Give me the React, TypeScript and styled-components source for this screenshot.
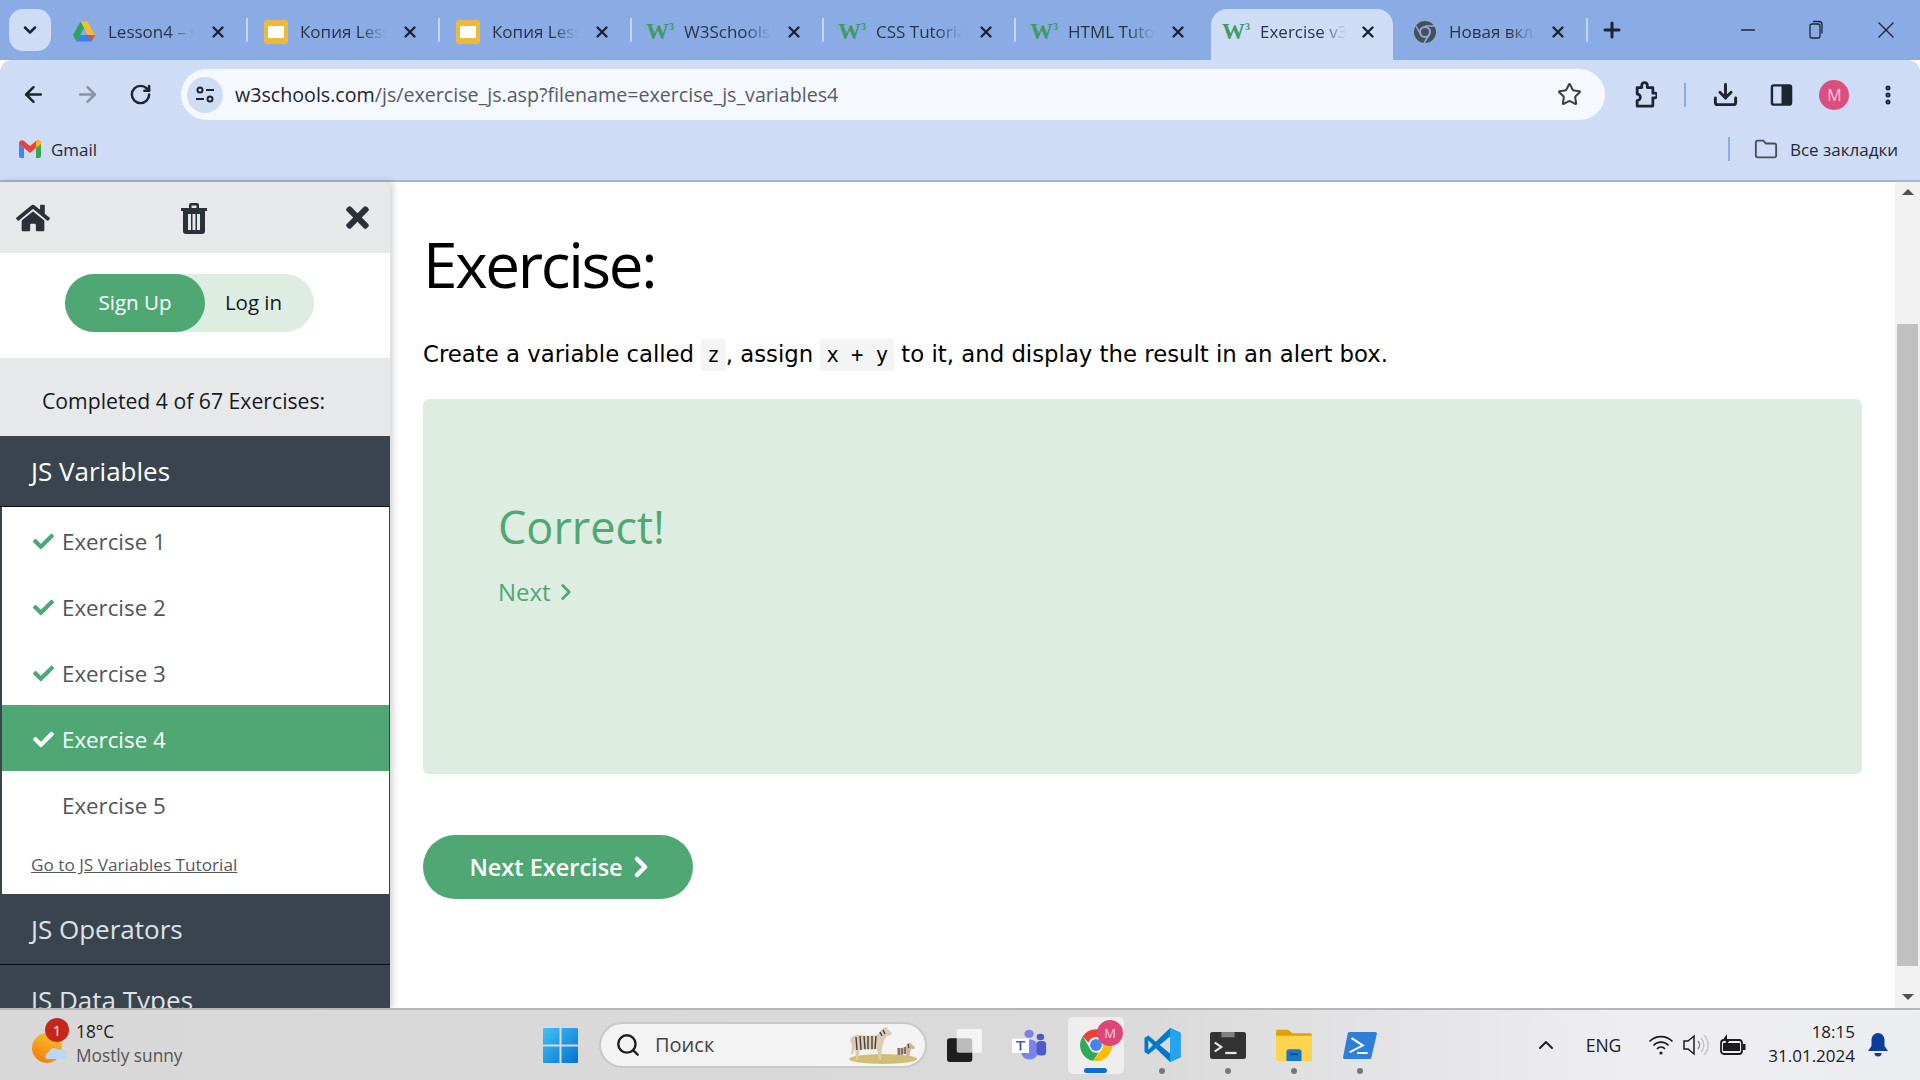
import React from "react"
import styled, { createGlobalStyle } from "styled-components"
import { ArrowLeft, ArrowRight, ChevronDown, ChevronRight, ChevronUp, Download, Minus, MoreVertical, Plus, RotateCw, Search, Star, X } from "lucide-react"
import { FaCheck, FaHome, FaTimes } from "react-icons/fa"

const uiFont = `"Open Sans", "Noto Sans", "Liberation Sans", sans-serif`

const GlobalStyle = createGlobalStyle`
    html, body {
        margin: 0;
        padding: 0;
        width: 1920px;
        height: 1080px;
        overflow: hidden;
        background: #ffffff;
        font-family: ${uiFont};
    }

    * {
        box-sizing: border-box;
    }
`

interface ITab {
    title: string
    icon: "drive" | "slides" | "w3" | "chrome"
    active?: boolean
}

const tabs: ITab[] = [
    { title: "Lesson4 – Google", icon: "drive" },
    { title: "Копия Lesson4", icon: "slides" },
    { title: "Копия Lesson4", icon: "slides" },
    { title: "W3Schools Online", icon: "w3" },
    { title: "CSS Tutorial", icon: "w3" },
    { title: "HTML Tutorial", icon: "w3" },
    { title: "Exercise v3.0", icon: "w3", active: true },
    { title: "Новая вкладка", icon: "chrome" },
]

const exercises = [
    { name: "Exercise 1", done: true },
    { name: "Exercise 2", done: true },
    { name: "Exercise 3", done: true },
    { name: "Exercise 4", done: true, current: true },
    { name: "Exercise 5", done: false },
]

function TabIcon({ icon }: { icon: ITab["icon"] }) {
    if (icon === "drive") {
        return (
            <svg width="24" height="24" viewBox="0 0 24 24">
                <path d="M8.500 1.500h7L23 15h-7z" fill="#f4bd2f" />
                <path d="M8.500 1.500 1 15l3.500 6.500L12 8z" fill="#2ea15a" />
                <path d="M4.500 21.500h15L23 15H8z" fill="#3d7fe6" />
                <path d="M16 15h7l-3.500 6.500z" fill="#e2503c" />
            </svg>
        )
    }
    if (icon === "slides") {
        return (
            <svg width="24" height="24" viewBox="0 0 24 24">
                <rect x="0" y="0" width="24" height="24" rx="3" fill="#ecb93b" />
                <rect x="4" y="6" width="16" height="12" fill="#ffffff" />
            </svg>
        )
    }
    if (icon === "chrome") {
        return (
            <svg width="24" height="24" viewBox="0 0 24 24">
                <circle cx="12" cy="12" r="11" fill="#4b4f55" />
                <circle cx="12" cy="12" r="6" fill="#8aabe4" />
                <circle cx="12" cy="12" r="4" fill="#4b4f55" />
                <path d="M12 6h10M8 15 3 6M16 15l-5 8" stroke="#8aabe4" strokeWidth="1.500" />
            </svg>
        )
    }
    return <W3Mark>W<sup>3</sup></W3Mark>
}

function ChromeLogo() {
    return (
        <svg width="38" height="38" viewBox="0 0 48 48">
            <path d="M24 4a20 20 0 0 1 17.300 10H24a10 10 0 0 0-9.500 7L7.300 13A20 20 0 0 1 24 4z" fill="#ea4335" />
            <path d="M7.300 13l9 15.500a10 10 0 0 0 11 5L20.500 44A20 20 0 0 1 7.300 13z" fill="#34a853" />
            <path d="M41.300 14A20 20 0 0 1 20.500 44l9-12a10 10 0 0 0 1-13z" fill="#fbbc04" />
            <circle cx="24" cy="24" r="9" fill="#ffffff" />
            <circle cx="24" cy="24" r="7.500" fill="#4285f4" />
        </svg>
    )
}

function App(): React.JSX.Element {
    return (
        <PageSCP>
            <GlobalStyle />

            <TabStripSCP>
                <TabMenuSCP><ChevronDown size={20} strokeWidth={3} /></TabMenuSCP>
                {tabs.map((tab, index) => (
                    <TabSCP key={index} $active={tab.active} $last={index === tabs.length - 1} $hideLine={tab.active || index === 5}>
                        <TabIconBoxSCP><TabIcon icon={tab.icon} /></TabIconBoxSCP>
                        <TabTitleSCP>{tab.title}</TabTitleSCP>
                        <X size={18} strokeWidth={3.2} color="#1c2530" />
                    </TabSCP>
                ))}
                <NewTabSCP><Plus size={24} strokeWidth={3} color="#1c2530" /></NewTabSCP>
                <WindowControlsSCP>
                    <Minus size={22} strokeWidth={1.4} />
                    <svg width="18" height="20" viewBox="0 0 18 20" fill="none" stroke="#1c2530" strokeWidth="1.300">
                        <rect x="3" y="4" width="10" height="14" rx="2" />
                        <path d="M6 1.500h6a3 3 0 0 1 3 3v9" />
                    </svg>
                    <X size={28} strokeWidth={1.2} />
                </WindowControlsSCP>
            </TabStripSCP>

            <ToolbarSCP>
                <NavIconsSCP>
                    <ArrowLeft size={25} strokeWidth={2.4} color="#1c2530" />
                    <ArrowRight size={25} strokeWidth={2.4} color="#8a93a3" />
                    <RotateCw size={23} strokeWidth={2.6} color="#1c2530" />
                </NavIconsSCP>
                <OmniboxSCP>
                    <SiteInfoSCP>
                        <svg width="20" height="20" viewBox="0 0 20 20" fill="none" stroke="#1c2530" strokeWidth="2">
                            <circle cx="5" cy="5" r="2.500" />
                            <path d="M11 5h8M1 14h8" />
                            <circle cx="15" cy="14" r="2.500" />
                        </svg>
                    </SiteInfoSCP>
                    <UrlSCP><b>w3schools.com</b>/js/exercise_js.asp?filename=exercise_js_variables4</UrlSCP>
                    <Star size={25} strokeWidth={2} color="#3a3f46" />
                </OmniboxSCP>
                <ToolIconsSCP>
                    <svg width="24" height="28" viewBox="0 0 26 28" fill="none" stroke="#1c2530" strokeWidth="3" strokeLinejoin="round">
                        <path d="M4 6h5V3.500a3 3 0 0 1 6 0V6h6v6h2a2.500 2.500 0 0 1 0 5h-2v9H4v-6a3 3 0 0 0 0-7z" transform="translate(0.500 0)" />
                    </svg>
                    <ToolDividerSCP />
                    <DownloadIconSCP size={27} strokeWidth={2.6} color="#1c2530" />
                    <svg width="23" height="24" viewBox="0 0 24 24">
                        <rect x="2" y="2" width="20" height="20" rx="2" fill="none" stroke="#1c2530" strokeWidth="2.500" />
                        <rect x="12" y="2" width="10" height="20" fill="#1c2530" />
                    </svg>
                    <AvatarSCP>M</AvatarSCP>
                    <MoreVertical size={24} strokeWidth={3} color="#1c2530" />
                </ToolIconsSCP>
            </ToolbarSCP>

            <BookmarksSCP>
                <svg width="22" height="18" viewBox="0 0 22 18">
                    <path d="M0 3v13a2 2 0 0 0 2 2h3V8z" fill="#4285f4" />
                    <path d="M22 3v13a2 2 0 0 1-2 2h-3V8z" fill="#34a853" />
                    <path d="M0 3a3 3 0 0 1 5-2l6 5 6-5a3 3 0 0 1 5 2v1l-5 4-6 5-6-5-5-4z" fill="#ea4335" />
                    <path d="M17 1a3 3 0 0 1 5 2v1l-5 4z" fill="#fbbc04" />
                </svg>
                <BookmarkTextSCP>Gmail</BookmarkTextSCP>
                <AllBookmarksSCP>
                    <BookmarkDividerSCP />
                    <svg width="24" height="22" viewBox="0 0 26 22" fill="none" stroke="#4b4f55" strokeWidth="2">
                        <path d="M2 4a2 2 0 0 1 2-2h6l3 3h9a2 2 0 0 1 2 2v11a2 2 0 0 1-2 2H4a2 2 0 0 1-2-2z" />
                    </svg>
                    <BookmarkTextSCP>Все закладки</BookmarkTextSCP>
                </AllBookmarksSCP>
            </BookmarksSCP>

            <ViewportSCP>
                <SidebarSCP>
                    <SideHeaderSCP>
                        <FaHome size={34} />
                        <TrashBoxSCP>
                            <svg width="28" height="32" viewBox="0 0 28 32">
                                <path d="M1 6h26v3H1zM9 6V3a2 2 0 0 1 2-2h6a2 2 0 0 1 2 2v3h-2.500V3.500h-5V6z" fill="#2b3139" />
                                <path d="M3 9h22v20a3 3 0 0 1-3 3H6a3 3 0 0 1-3-3z" fill="#2b3139" />
                                <path d="M8 12h3v16H8zM12.500 12h3v16h-3zM17 12h3v16h-3z" fill="#e7e8ea" />
                            </svg>
                        </TrashBoxSCP>
                        <FaTimes size={33} />
                    </SideHeaderSCP>

                    <AuthAreaSCP>
                        <AuthPillSCP>
                            <SignUpSCP>Sign Up</SignUpSCP>
                            <LoginSCP>Log in</LoginSCP>
                        </AuthPillSCP>
                    </AuthAreaSCP>

                    <CompletedSCP>Completed 4 of 67 Exercises:</CompletedSCP>

                    <SectionTitleSCP $open>JS Variables</SectionTitleSCP>
                    <ExerciseListSCP>
                        {exercises.map((exercise) => (
                            <ExerciseRowSCP key={exercise.name} $current={exercise.current}>
                                <CheckBoxSCP $current={exercise.current}>{exercise.done && <FaCheck size={21} />}</CheckBoxSCP>
                                {exercise.name}
                            </ExerciseRowSCP>
                        ))}
                        <TutorialLinkSCP>Go to JS Variables Tutorial</TutorialLinkSCP>
                    </ExerciseListSCP>
                    <SectionTitleSCP>JS Operators</SectionTitleSCP>
                    <SectionTitleSCP>JS Data Types</SectionTitleSCP>
                </SidebarSCP>

                <MainSCP>
                    <TitleSCP>Exercise:</TitleSCP>
                    <QuestionSCP>
                        Create a variable called <CodeSCP>z</CodeSCP>, assign <CodeSCP>x + y</CodeSCP> to it, and display the result in an alert box.
                    </QuestionSCP>
                    <ResultBoxSCP>
                        <CorrectSCP>Correct!</CorrectSCP>
                        <NextLinkSCP>Next <ChevronRight size={26} strokeWidth={2.6} /></NextLinkSCP>
                    </ResultBoxSCP>
                    <NextButtonSCP>Next Exercise <ChevronRight size={32} strokeWidth={3.4} /></NextButtonSCP>
                </MainSCP>

                <ScrollbarSCP>
                    <ScrollArrowSCP $up />
                    <ScrollThumbSCP />
                    <ScrollArrowSCP />
                </ScrollbarSCP>
            </ViewportSCP>

            <TaskbarSCP>
                <WeatherSCP>
                    <WeatherIconSCP>
                        <svg width="34" height="32" viewBox="0 0 34 32">
                            <defs>
                                <linearGradient id="sun" x1="0.700" y1="0" x2="0.200" y2="1">
                                    <stop offset="0" stopColor="#f5c12e" />
                                    <stop offset="1" stopColor="#f57a0b" />
                                </linearGradient>
                            </defs>
                            <circle cx="15" cy="16" r="15" fill="url(#sun)" />
                            <path d="M14 27a5 5 0 0 1 3-7 6 6 0 0 1 10-2 5 5 0 0 1 5 9z" fill="#bcd6f5" />
                        </svg>
                        <WeatherBadgeSCP>1</WeatherBadgeSCP>
                    </WeatherIconSCP>
                    <WeatherTextSCP>
                        <span>18°C</span>
                        <WeatherNoteSCP>Mostly sunny</WeatherNoteSCP>
                    </WeatherTextSCP>
                </WeatherSCP>

                <TaskCenterSCP>
                    <svg width="35" height="35" viewBox="0 0 35 35">
                        <defs>
                            <linearGradient id="win" x1="0" y1="0" x2="1" y2="1">
                                <stop offset="0" stopColor="#3fc3f7" />
                                <stop offset="1" stopColor="#0472cf" />
                            </linearGradient>
                        </defs>
                        <path d="M1 0h15.500v16.500H0V1a1 1 0 0 1 1-1zM18.500 0H34a1 1 0 0 1 1 1v15.500H18.500zM0 18.500h16.500V35H1a1 1 0 0 1-1-1zM18.500 18.500H35V34a1 1 0 0 1-1 1H18.500z" fill="url(#win)" />
                    </svg>
                    <SearchBoxSCP>
                        <Search size={26} strokeWidth={2.2} color="#1f1f1f" />
                        <SearchTextSCP>Поиск</SearchTextSCP>
                        <svg width="72" height="38" viewBox="0 0 72 38">
                            <ellipse cx="36" cy="33" rx="34" ry="5" fill="#d3bd72" />
                            <path d="M3 14c1-3 4-5 8-5 7 1 14 1 19 0l6-7 3-1 6 6-1 2-4 1-3 4-2 8-1 12h-2l-2-11-11 1-6-1-2 11H9l-1-12-2 6-2 0 1-8z" fill="#d9ccb8" />
                            <path d="M9 11l1 13M13 10l1 14M17 10l1 13M21 10l0 13M25 10l0 13M29 10l-1 13M33 6l2 4M36 4l2 4" stroke="#4a3f35" strokeWidth="1.400" fill="none" />
                            <path d="M50 22c3 0 6 0 8-1l3-4 2 0 5 4-1 2-3 0-1 3-1 7h-2l-1-5h-5l-1 5h-2l-1-5z" fill="#c8b59a" />
                            <path d="M52 22v7M55 22v7M58 21v7M61 18l1 4" stroke="#4a3f35" strokeWidth="1.100" fill="none" />
                        </svg>
                    </SearchBoxSCP>
                    <TaskSlotSCP>
                        <svg width="35" height="33" viewBox="0 0 36 36" preserveAspectRatio="none">
                            <rect x="0" y="10" width="26" height="26" rx="3" fill="#1e1e1e" />
                            <rect x="10" y="0" width="26" height="26" rx="2" fill="#ffffff" opacity="0.700" />
                        </svg>
                    </TaskSlotSCP>
                    <TaskSlotSCP>
                        <svg width="36" height="32" viewBox="0 0 38 40" preserveAspectRatio="none">
                            <circle cx="18" cy="6" r="5" fill="#7b83eb" />
                            <circle cx="30" cy="10" r="4" fill="#5059c9" />
                            <rect x="10" y="13" width="17" height="25" rx="8" fill="#7b83eb" />
                            <rect x="26" y="15" width="10" height="18" rx="4" fill="#5059c9" />
                            <rect x="0" y="12" width="18" height="18" fill="#ffffff" />
                            <path d="M4 16h10M9 16v11" stroke="#4b53bc" strokeWidth="2" />
                        </svg>
                    </TaskSlotSCP>
                    <TaskSlotSCP $active>
                        <ActiveTileSCP>
                            <ChromeLogo />
                            <ChromeBadgeSCP>M</ChromeBadgeSCP>
                            <ActiveBarSCP />
                        </ActiveTileSCP>
                    </TaskSlotSCP>
                    <TaskSlotSCP $running>
                        <svg width="37" height="36" viewBox="0 0 38 38">
                            <path d="M27 1 38 6v26l-11 5-15-14.500L4 29 0 26.500V11.500L4 9l8 6.500z" fill="#0078c9" />
                            <path d="M27 1 38 6v26l-11 5z" fill="#22a4ee" />
                            <path d="M27 10v18l-11-9z" fill="#d9d9d9" />
                            <path d="M4 14v10l5-5z" fill="#d9d9d9" />
                        </svg>
                    </TaskSlotSCP>
                    <TaskSlotSCP $running>
                        <svg width="36" height="27" viewBox="0 0 38 36" preserveAspectRatio="none">
                            <rect width="38" height="36" rx="3" fill="#333333" />
                            <rect x="12" width="14" height="7" fill="#808080" />
                            <path d="M5 14l7 6-7 6" fill="none" stroke="#e5e5e5" strokeWidth="2.500" />
                            <path d="M16 28h12" stroke="#e5e5e5" strokeWidth="3" />
                        </svg>
                    </TaskSlotSCP>
                    <TaskSlotSCP $running>
                        <svg width="36" height="32" viewBox="0 0 38 38" preserveAspectRatio="none">
                            <path d="M0 3a2 2 0 0 1 2-2h11l4 4h19a2 2 0 0 1 2 2v4H0z" fill="#e0a100" />
                            <path d="M0 8h38v28a2 2 0 0 1-2 2H2a2 2 0 0 1-2-2z" fill="#fdd34f" />
                            <path d="M11 27a3 3 0 0 1 3-3h10a3 3 0 0 1 3 3v11H11z" fill="#1a76c9" />
                            <path d="M15 30h8" stroke="#0c3f78" strokeWidth="2" />
                        </svg>
                    </TaskSlotSCP>
                    <TaskSlotSCP $running>
                        <svg width="34" height="27" viewBox="0 0 36 36" preserveAspectRatio="none">
                            <path d="M7 0h27a2 2 0 0 1 2 2l-6 32a2 2 0 0 1-2 2H2a2 2 0 0 1-2-2L5 2a2 2 0 0 1 2-2z" fill="#2f7fd8" />
                            <path d="M9 8l12 10-14 9M15 28h11" fill="none" stroke="#ffffff" strokeWidth="2.500" />
                        </svg>
                    </TaskSlotSCP>
                </TaskCenterSCP>

                <TrayIconsSCP>
                    <ChevronUp size={24} strokeWidth={2} color="#222" />
                    <TrayItemSCP $gap={28}><TrayLangSCP>ENG</TrayLangSCP></TrayItemSCP>
                    <TrayItemSCP $gap={27}>
                        <svg width="26" height="22" viewBox="0 0 26 22" fill="none" stroke="#1c1c1c" strokeWidth="1.700">
                            <path d="M1.500 7.500a16 16 0 0 1 23 0M5.500 11.500a10 10 0 0 1 15 0M9 15a5 5 0 0 1 8 0" />
                            <circle cx="13" cy="19" r="1.600" fill="#1c1c1c" stroke="none" />
                        </svg>
                    </TrayItemSCP>
                    <TrayItemSCP $gap={9}>
                        <svg width="26" height="24" viewBox="0 0 26 24" fill="none" strokeWidth="1.500">
                            <path d="M1 8h4l6-5v18l-6-5H1z" stroke="#1c1c1c" />
                            <path d="M15 8a6 6 0 0 1 0 8" stroke="#8a8a8a" />
                            <path d="M18 5a10 10 0 0 1 0 14M21 2a14 14 0 0 1 0 20" stroke="#c4c4c4" />
                        </svg>
                    </TrayItemSCP>
                    <TrayItemSCP $gap={11}>
                        <svg width="26" height="22" viewBox="0 0 26 22">
                            <rect x="1" y="6" width="21" height="14" rx="3" fill="none" stroke="#1c1c1c" strokeWidth="1.800" />
                            <rect x="3" y="9" width="17" height="8" fill="#1c1c1c" />
                            <rect x="23" y="10" width="2.500" height="6" fill="#1c1c1c" />
                            <path d="M7 0 2 7h4l-1 5 6-7H7z" fill="#1c1c1c" />
                        </svg>
                    </TrayItemSCP>
                    <TrayItemSCP $gap={22}>
                        <ClockSCP>
                            <span>18:15</span>
                            <span>31.01.2024</span>
                        </ClockSCP>
                    </TrayItemSCP>
                    <TrayItemSCP $gap={13}>
                        <svg width="20" height="24" viewBox="0 0 20 24">
                            <path d="M10 0a6.500 6.500 0 0 1 6.500 6.500V13l3.500 5H0l3.500-5V6.500A6.500 6.500 0 0 1 10 0z" fill="#0a3d9c" />
                            <path d="M6.500 20h7a3.500 3.500 0 0 1-7 0z" fill="#0a3d9c" />
                        </svg>
                    </TrayItemSCP>
                </TrayIconsSCP>
            </TaskbarSCP>
        </PageSCP>
    )
}

export default App

const PageSCP = styled.div`
    width: 1920px;
    height: 1080px;
    display: flex;
    flex-direction: column;
    overflow: hidden;
`

const TabStripSCP = styled.div`
    height: 60px;
    background: #8aabe4;
    display: flex;
    padding: 9px 0 0 9px;
    color: #1c2530;
`

const TabMenuSCP = styled.div`
    width: 42px;
    height: 42px;
    margin-right: 4px;
    border-radius: 14px;
    background: #cedcf5;
    display: flex;
    align-items: center;
    justify-content: center;
`

const TabSCP = styled.div<{ $active?: boolean; $last?: boolean; $hideLine?: boolean }>`
    width: ${(props) => (props.$active ? "182px" : props.$last ? "188px" : "192px")};
    height: 51px;
    margin: ${(props) => (props.$active ? "0 6px 0 4px" : "0")};
    padding: 0 ${(props) => (props.$active ? "16px" : "20px")} 6px ${(props) => (props.$active ? "13px" : props.$last ? "14px" : "17px")};
    display: flex;
    align-items: center;
    position: relative;
    border-radius: 16px 16px 0 0;
    background: ${(props) => (props.$active ? "#cedcf5" : "transparent")};

    &::after {
        content: "";
        display: ${(props) => (props.$hideLine ? "none" : "block")};
        position: absolute;
        right: -1px;
        top: 9px;
        width: 2px;
        height: 24px;
        background: #c5d5f1;
    }
`

const TabIconBoxSCP = styled.div`
    width: 24px;
    height: 24px;
    flex: none;
    display: flex;
    align-items: center;
    justify-content: center;
`

const W3Mark = styled.span`
    font-family: "Liberation Serif", serif;
    font-weight: 700;
    font-size: 23px;
    line-height: 24px;
    color: #3f9a66;

    sup {
        font-size: 10px;
        line-height: 0;
        vertical-align: 9px;
    }
`

const TabTitleSCP = styled.div`
    width: 86px;
    margin: 0 auto 0 12px;
    overflow: hidden;
    white-space: nowrap;
    font-size: 17px;
    color: #2a3542;
    -webkit-mask-image: linear-gradient(90deg, #000 70%, transparent 100%);
    mask-image: linear-gradient(90deg, #000 70%, transparent 100%);
`

const NewTabSCP = styled.div`
    width: 48px;
    height: 42px;
    display: flex;
    align-items: center;
    justify-content: center;
    margin-left: 1px;
`

const WindowControlsSCP = styled.div`
    margin-left: auto;
    width: 183px;
    height: 42px;
    padding-right: 20px;
    display: flex;
    align-items: center;
    justify-content: space-between;
`

const ToolbarSCP = styled.div`
    height: 60px;
    background: #cedcf5;
    border-radius: 12px 12px 0 0;
    display: flex;
    align-items: flex-start;
    padding-top: 9px;
`

const NavIconsSCP = styled.div`
    width: 181px;
    height: 51px;
    padding: 0 29px 0 21px;
    display: flex;
    align-items: center;
    justify-content: space-between;
`

const OmniboxSCP = styled.div`
    width: 1424px;
    height: 51px;
    border-radius: 26px;
    background: #f5f8fd;
    padding: 0 23px 0 6px;
    display: flex;
    align-items: center;
`

const SiteInfoSCP = styled.div`
    width: 36px;
    height: 36px;
    flex: none;
    border-radius: 50%;
    background: #cedcf5;
    display: flex;
    align-items: center;
    justify-content: center;
`

const UrlSCP = styled.div`
    flex: 1;
    margin-left: 12px;
    font-size: 19.650px;
    color: #555c66;
    white-space: nowrap;

    b {
        font-weight: 400;
        color: #1c2530;
    }
`

const ToolIconsSCP = styled.div`
    flex: 1;
    height: 51px;
    padding: 0 20px 0 28px;
    display: flex;
    align-items: center;
    justify-content: space-between;
`

const DownloadIconSCP = styled(Download)`
    margin-right: 4px;
`

const ToolDividerSCP = styled.div`
    width: 2px;
    height: 24px;
    background: #8aabe4;
`

const AvatarSCP = styled.div`
    width: 30px;
    height: 30px;
    border-radius: 50%;
    background: #dd4d7d;
    color: #f7d5e1;
    font-size: 16px;
    display: flex;
    align-items: center;
    justify-content: center;
`

const BookmarksSCP = styled.div`
    height: 62px;
    background: #cedcf5;
    border-bottom: 2px solid #a9b5cf;
    display: flex;
    align-items: center;
    padding: 0 22px 2px 19px;
`

const BookmarkTextSCP = styled.span`
    font-size: 17px;
    color: #1f2a37;
    margin-left: 10px;
`

const BookmarkDividerSCP = styled(ToolDividerSCP)`
    margin-right: 12px;
`

const AllBookmarksSCP = styled.div`
    margin-left: auto;
    display: flex;
    align-items: center;
    gap: 12px;

    span {
        margin-left: 0;
    }
`

const ViewportSCP = styled.div`
    flex: 1;
    min-height: 0;
    display: flex;
    background: #ffffff;
`

const SidebarSCP = styled.aside`
    width: 390px;
    flex: none;
    overflow: hidden;
    background: #ffffff;
    box-shadow: 3px 0 7px rgba(0, 0, 0, 0.18);
    position: relative;
`

const SideHeaderSCP = styled.div`
    height: 71px;
    background: #e7e8ea;
    color: #2b3139;
    padding: 0 16px 0 16px;
    display: flex;
    align-items: center;
    justify-content: space-between;
`

const TrashBoxSCP = styled.div`
    display: flex;
    margin-right: 3px;
`

const AuthAreaSCP = styled.div`
    height: 105px;
    padding: 21px 0 0 65px;
    margin-right: 1px;
    background: #ffffff;
`

const AuthPillSCP = styled.div`
    width: 249px;
    height: 58px;
    border-radius: 29px;
    background: #ddede2;
    display: flex;
    align-items: center;
    font-size: 20.500px;
`

const SignUpSCP = styled.div`
    width: 140px;
    height: 58px;
    padding-bottom: 2px;
    border-radius: 29px;
    background: #4fa873;
    color: #ffffff;
    font-size: 20.500px;
    font-weight: 500;
    display: flex;
    align-items: center;
    justify-content: center;
`

const LoginSCP = styled.div`
    flex: 1;
    color: #16191d;
    text-align: center;
    padding: 0 12px 2px 0;
`

const CompletedSCP = styled.div`
    height: 78px;
    background: #e7e8ea;
    color: #16191d;
    font-size: 21.200px;
    padding: 6px 0 0 42px;
    display: flex;
    align-items: center;
`

const SectionTitleSCP = styled.div<{ $open?: boolean }>`
    height: 71px;
    padding-left: 31px;
    background: #3a444e;
    border-bottom: 1px solid #0d1013;
    color: ${(props) => (props.$open ? "#ffffff" : "#dfe2e5")};
    font-size: 26px;
    display: flex;
    align-items: center;
`

const ExerciseListSCP = styled.div`
    border-left: 2px solid #3a444e;
    border-right: 1px solid #3a444e;
    background: #ffffff;
`

const ExerciseRowSCP = styled.div<{ $current?: boolean }>`
    height: 66px;
    display: flex;
    align-items: center;
    padding: 2px 0 0 31px;
    font-size: 22.300px;
    background: ${(props) => (props.$current ? "#4fa873" : "#ffffff")};
    color: ${(props) => (props.$current ? "#ffffff" : "#50555a")};
`

const CheckBoxSCP = styled.div<{ $current?: boolean }>`
    width: 29px;
    display: flex;
    align-items: center;
    color: ${(props) => (props.$current ? "#ffffff" : "#4fa873")};
`

const TutorialLinkSCP = styled.a`
    display: flex;
    align-items: center;
    height: 57px;
    padding: 0 0 2px 29px;
    font-size: 17.200px;
    color: #55595e;
    text-decoration: underline;
`

const MainSCP = styled.main`
    flex: 1;
    min-width: 0;
    padding: 0 33px 0 33px;
    color: #000000;
`

const TitleSCP = styled.h1`
    margin: 46px 0 0;
    height: 73px;
    font-size: 62px;
    letter-spacing: -2.300px;
    line-height: 73px;
    font-weight: 400;
`

const QuestionSCP = styled.p`
    margin: 35px 0 0;
    height: 36px;
    font-family: "DejaVu Sans", Verdana, sans-serif;
    font-size: 22.800px;
    line-height: 36px;
    white-space: nowrap;
`

const CodeSCP = styled.code`
    font-family: "DejaVu Sans Mono", monospace;
    font-size: 20.500px;
    background: #f4f4f4;
    padding: 4px 6px;
`

const ResultBoxSCP = styled.div`
    margin-top: 27px;
    height: 375px;
    border-radius: 6px;
    background: #ddede2;
    padding: 96px 0 0 75px;
    color: #4fa873;
`

const CorrectSCP = styled.div`
    font-size: 45px;
    line-height: 64px;
`

const NextLinkSCP = styled.div`
    margin-top: 17px;
    font-size: 24px;
    line-height: 32px;
    display: flex;
    align-items: center;
    gap: 2px;
`

const NextButtonSCP = styled.div`
    margin-top: 61px;
    width: 270px;
    height: 64px;
    border-radius: 32px;
    padding-left: 10px;
    background: #4fa873;
    color: #ffffff;
    font-size: 23.500px;
    font-weight: 600;
    display: flex;
    align-items: center;
    justify-content: center;

    svg {
        margin-left: 2px;
    }
`

const ScrollbarSCP = styled.div`
    width: 25px;
    flex: none;
    background: #f1f1f1;
    padding: 7px 2px 8px;
    display: flex;
    flex-direction: column;
    align-items: center;
    justify-content: space-between;
    position: relative;
    z-index: 1;
`

const ScrollArrowSCP = styled.div<{ $up?: boolean }>`
    width: 0;
    height: 0;
    border-left: 6px solid transparent;
    border-right: 6px solid transparent;
    border-top: ${(props) => (props.$up ? "0" : "6px solid #505050")};
    border-bottom: ${(props) => (props.$up ? "6px solid #505050" : "0")};
`

const ScrollThumbSCP = styled.div`
    width: 21px;
    height: 642px;
    margin-top: 126px;
    margin-bottom: 26px;
    background: #c0c0c0;
`

const TaskbarSCP = styled.footer`
    height: 72px;
    flex: none;
    border-top: 2px solid #b6b6b6;
    background: linear-gradient(90deg, #d8d8d8 0%, #dadada 60%, #eeeef2 85%, #ecedf1 100%);
    display: flex;
    align-items: center;
    position: relative;
    z-index: 2;
`

const WeatherSCP = styled.div`
    width: 543px;
    flex: none;
    padding-left: 32px;
    display: flex;
    align-items: center;
    gap: 10px;
`

const WeatherIconSCP = styled.div`
    width: 34px;
    height: 32px;
    position: relative;
    margin-top: 6px;
`

const WeatherBadgeSCP = styled.div`
    position: absolute;
    top: -14px;
    right: -3px;
    width: 24px;
    height: 24px;
    border-radius: 50%;
    background: #c4281c;
    color: #ffffff;
    font-size: 15px;
    display: flex;
    align-items: center;
    justify-content: center;
`

const WeatherTextSCP = styled.div`
    display: flex;
    flex-direction: column;
    font-size: 17.300px;
    line-height: 24px;
    margin-top: -2px;
    color: #1a1a1a;
`

const WeatherNoteSCP = styled.span`
    color: #555555;
`

const TaskCenterSCP = styled.div`
    display: flex;
    align-items: center;
`

const SearchBoxSCP = styled.div`
    width: 328px;
    height: 46px;
    margin: 0 4px 0 21px;
    padding: 0 6px 0 14px;
    border-radius: 23px;
    background: #f3f3f3;
    border: 2px solid #c8c8c8;
    display: flex;
    align-items: center;
`

const SearchTextSCP = styled.span`
    flex: 1;
    margin: 0 0 2px 14px;
    font-size: 20px;
    color: #444444;
`

const TaskSlotSCP = styled.div<{ $running?: boolean; $active?: boolean }>`
    width: 66px;
    height: 70px;
    display: flex;
    align-items: center;
    justify-content: center;
    position: relative;

    &::after {
        content: "";
        display: ${(props) => (props.$running ? "block" : "none")};
        position: absolute;
        left: 50%;
        bottom: 6px;
        width: 6px;
        height: 6px;
        margin-left: -3px;
        border-radius: 50%;
        background: #777777;
    }
`

const ActiveTileSCP = styled.div`
    width: 56px;
    height: 57px;
    border-radius: 5px;
    background: #eeeeee;
    display: flex;
    align-items: center;
    justify-content: center;
    position: relative;
`

const ChromeBadgeSCP = styled.div`
    position: absolute;
    top: 3px;
    right: 1px;
    width: 26px;
    height: 26px;
    border-radius: 50%;
    background: #e0457a;
    color: #f7d5e1;
    font-size: 13px;
    display: flex;
    align-items: center;
    justify-content: center;
`

const ActiveBarSCP = styled.div`
    position: absolute;
    left: 16px;
    bottom: 1px;
    width: 23px;
    height: 5px;
    border-radius: 3px;
    background: #0a6fd0;
`

const TrayIconsSCP = styled.div`
    margin-left: auto;
    padding-right: 32px;
    display: flex;
    align-items: center;
`

const TrayItemSCP = styled.div<{ $gap: number }>`
    margin-left: ${(props) => props.$gap}px;
    display: flex;
    align-items: center;
`

const TrayLangSCP = styled.span`
    font-size: 17.500px;
    color: #1a1a1a;
`

const ClockSCP = styled.div`
    display: flex;
    flex-direction: column;
    align-items: flex-end;
    font-size: 17px;
    line-height: 24px;
    margin-top: -2px;
    color: #1a1a1a;
`
